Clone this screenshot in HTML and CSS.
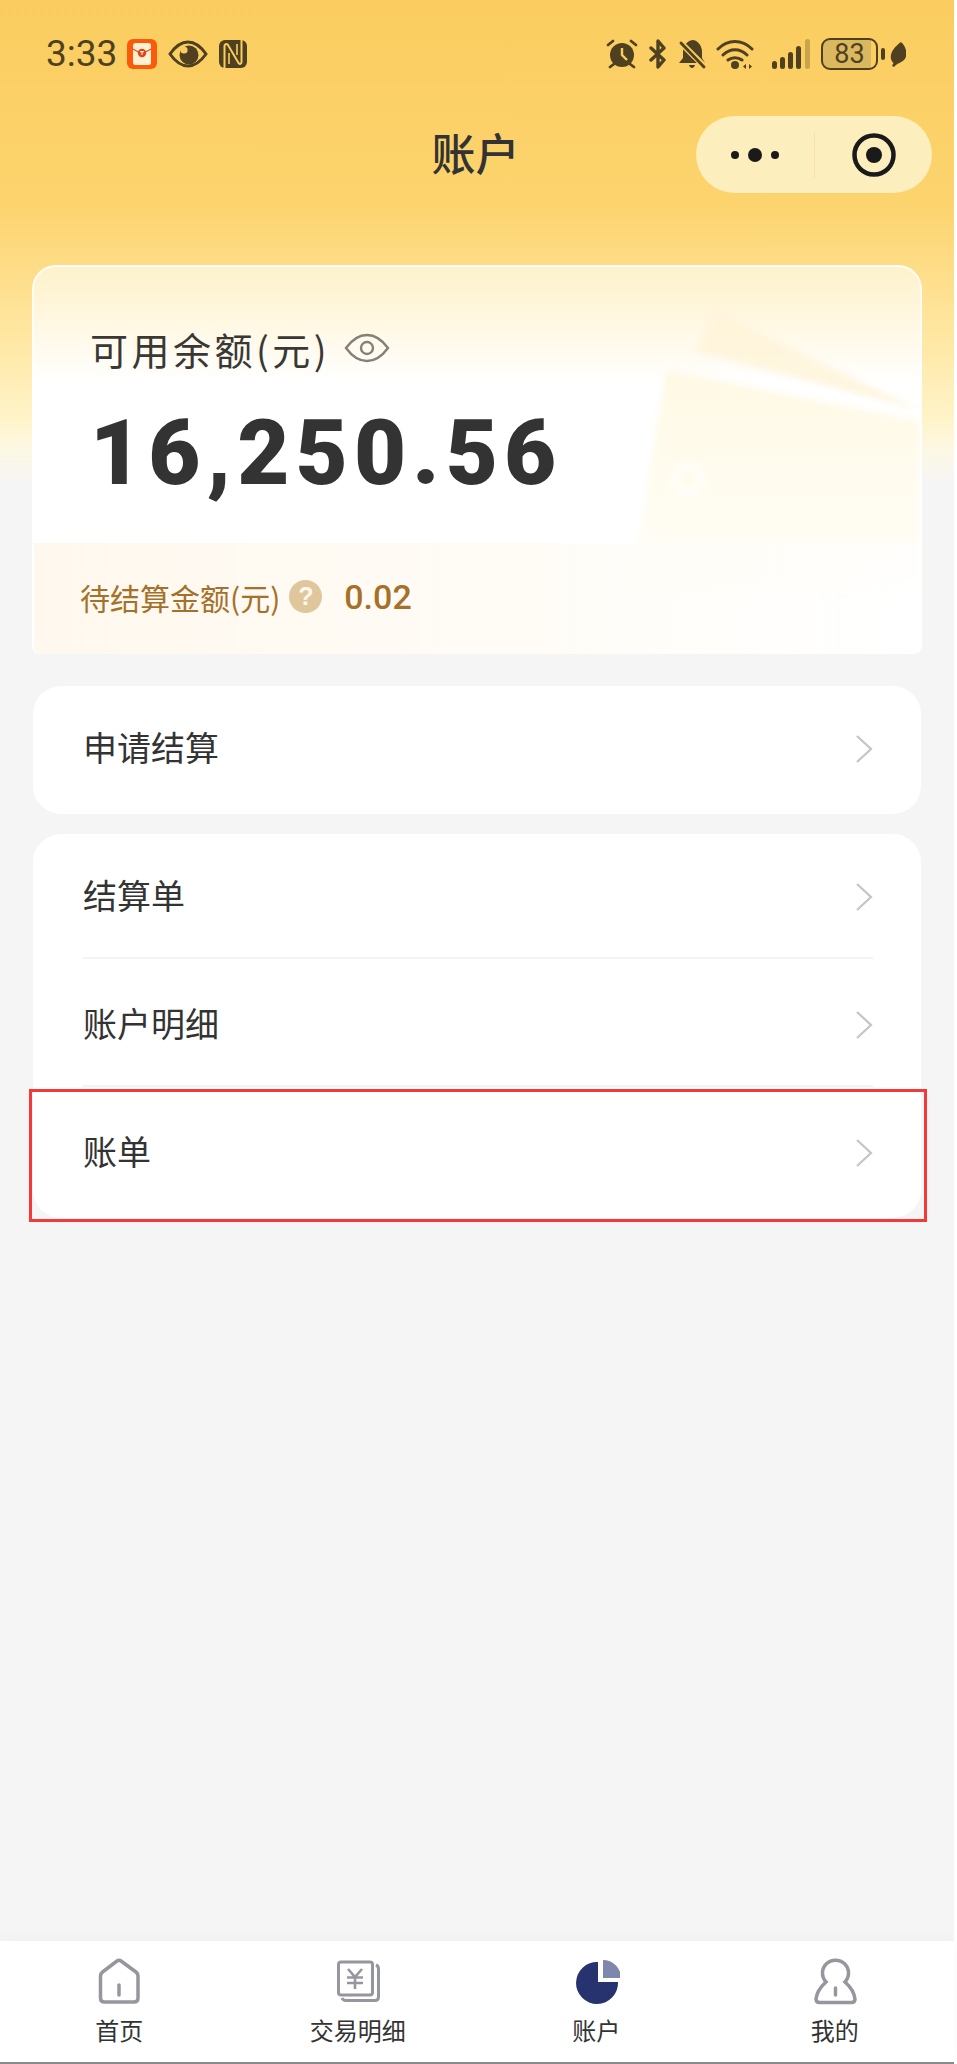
FILE: index.html
```html
<!DOCTYPE html>
<html lang="zh-CN">
<head>
    <meta charset="UTF-8">
    <meta name="viewport" content="width=device-width, initial-scale=1.0">
    <title>账户</title>
    <link rel="stylesheet" href="styles.css">
</head>
<body>
    <div class="page">

        <div class="status-bar">
            <div class="status-left">
                <span class="time">3:33</span>
                <svg class="ic-app" viewBox="0 0 30 30">
                    <rect width="30" height="30" rx="6" fill="#fb5a0a"/>
                    <rect x="6" y="4" width="18" height="22" rx="2.5" fill="#fff0d2"/>
                    <path d="M6 10 L15 15 L24 10" fill="none" stroke="#e8502a" stroke-width="1.2"/>
                    <circle cx="15" cy="14" r="4.2" fill="#e63f1c"/>
                    <path d="M13 12.6 H17 M15 12.6 V16" stroke="#fff0d2" stroke-width="1.1"/>
                </svg>
                <svg class="ic-eye" viewBox="0 0 40 28">
                    <path d="M2 14 C9 4 15 2 20 2 C25 2 31 4 38 14 C31 24 25 26 20 26 C15 26 9 24 2 14 Z" fill="none" stroke="#4f4120" stroke-width="3"/>
                    <circle cx="21" cy="15" r="9.500" fill="#4f4120"/>
                    <circle cx="16" cy="10" r="3.600" fill="#fbcd60"/>
                </svg>
                <svg class="ic-nfc" viewBox="0 0 28 28">
                    <rect width="28" height="28" rx="6" fill="#4f4120"/>
                    <path d="M5.500 28 V6 C5.500 4 7.500 3.500 9 5 L19.500 23 C21 24.500 22.500 24 22.500 22 V0" fill="none" stroke="#fbcd60" stroke-width="2"/>
                    <path d="M10 13 V24 M18 4 V15" stroke="#fbcd60" stroke-width="1.600"/>
                </svg>
            </div>
            <div class="status-right">
                <svg class="ic-alarm" viewBox="0 0 32 30">
                    <circle cx="16" cy="16" r="12" fill="#4f4120"/>
                    <path d="M16 9 V16 L21 21" fill="none" stroke="#fbcd60" stroke-width="2.400"/>
                    <path d="M2 6 L7 2 M30 6 L25 2 M4 28 L8 25 M28 28 L24 25" stroke="#4f4120" stroke-width="2.800" stroke-linecap="round"/>
                </svg>
                <svg class="ic-bt" viewBox="0 0 20 30">
                    <path d="M3 9 L16 21 L10 28 V2 L16 9 L3 21" fill="none" stroke="#4f4120" stroke-width="3.400" stroke-linejoin="round" stroke-linecap="round"/>
                </svg>
                <svg class="ic-bell" viewBox="0 0 28 30">
                    <path d="M15 1 C21 2 24 8 24 13 V19 L27 24 H1 L5 19 V13 C5 8 8 2 15 1 Z" fill="#4f4120"/>
                    <path d="M11 26 H17 C16 30 12 30 11 26 Z" fill="#4f4120"/>
                    <path d="M1 2 L27 28" stroke="#fbcd60" stroke-width="6"/>
                    <path d="M3 4 L26 28" stroke="#4f4120" stroke-width="2.800" stroke-linecap="round"/>
                </svg>
                <svg class="ic-wifi" viewBox="0 0 40 30">
                    <path d="M2 10 C12 0 26 0 36 10 M7 16 C14 9 24 9 31 16 M12 21 C16 18 22 18 26 21" fill="none" stroke="#4f4120" stroke-width="3" stroke-linecap="round"/>
                    <circle cx="19" cy="26" r="4" fill="#4f4120"/>
                    <path d="M30 25 L27 27.500 L30 30 Z M33 25 L36 27.500 L33 30 Z" fill="#4f4120"/>
                </svg>
                <svg class="ic-signal" viewBox="0 0 38 30">
                    <rect x="0" y="22" width="5" height="8" rx="2.500" fill="#4f4120"/>
                    <rect x="8" y="18" width="5" height="12" rx="2.500" fill="#4f4120"/>
                    <rect x="16" y="13" width="5" height="17" rx="2.500" fill="#4f4120"/>
                    <rect x="24" y="7" width="5" height="23" rx="2.500" fill="#4f4120"/>
                    <rect x="33" y="0" width="5" height="30" rx="2.500" fill="#c9a549"/>
                </svg>
                <div class="battery">
                    <span class="battery-level">83</span>
                </div>
                <span class="battery-nub"></span>
                <svg class="ic-leaf" viewBox="0 0 16 25">
                    <path d="M11 0 C17 5 18 14 14 18 C11 21 7 21 4 25 L2 24 C2.500 23 3 22 3.500 21 C-2 16 1 7 11 0 Z" fill="#4f4120"/>
                </svg>
            </div>
        </div>

        <div class="nav">
            <h1 class="nav-title">账户</h1>
            <div class="capsule">
                <div class="capsule-more">
                    <span class="dot"></span>
                    <span class="dot dot-big"></span>
                    <span class="dot"></span>
                </div>
                <div class="capsule-close">
                    <svg class="ic-target" viewBox="0 0 44 44">
                        <circle cx="22" cy="22" r="19.500" fill="none" stroke="#1a1a1a" stroke-width="4.500"/>
                        <circle cx="22" cy="22" r="8" fill="#1a1a1a"/>
                    </svg>
                </div>
            </div>
        </div>

        <div class="balance-card">
            <svg class="wallet" viewBox="0 0 290 280">
                <defs>
                    <linearGradient id="walletFade" x1="0" y1="0" x2="0" y2="1">
                        <stop offset="0" stop-color="#fff9e4"/>
                        <stop offset="1" stop-color="#fffefa"/>
                    </linearGradient>
                </defs>
                <path d="M65 38 L88 0 L290 97 Z" fill="#fff4d8" opacity="0.8"/>
                <path d="M35 62 Q36 58 42 58 L290 108 V280 H0 Z" fill="url(#walletFade)"/>
                <circle cx="58" cy="166" r="14" fill="none" stroke="#ffffff" stroke-width="6" opacity="0.7"/>
            </svg>
            <div class="balance-main">
                <div class="balance-label">
                    <span>可用余额(元)</span>
                    <svg class="ic-view" viewBox="0 0 46 30">
                        <path d="M2 15 C10 4 17 2 23 2 C29 2 36 4 44 15 C36 26 29 28 23 28 C17 28 10 26 2 15 Z" fill="none" stroke="#85807a" stroke-width="2.400"/>
                        <circle cx="23" cy="15" r="6" fill="none" stroke="#85807a" stroke-width="2.400"/>
                    </svg>
                </div>
                <div class="balance-amount">16,250.56</div>
            </div>
            <div class="balance-pending">
                <span class="pending-label">待结算金额(元)</span>
                <span class="help">?</span>
                <span class="pending-value">0.02</span>
            </div>
        </div>

        <div class="menu menu-first">
            <div class="menu-row">
                <span class="menu-text">申请结算</span>
                <svg class="chevron" viewBox="0 0 18 28"><path d="M2 1 L16 14 L2 27" fill="none" stroke="#c4c4c4" stroke-width="2.200"/></svg>
            </div>
        </div>

        <div class="menu">
            <div class="menu-row menu-line">
                <span class="menu-text">结算单</span>
                <svg class="chevron" viewBox="0 0 18 28"><path d="M2 1 L16 14 L2 27" fill="none" stroke="#c4c4c4" stroke-width="2.200"/></svg>
            </div>
            <div class="menu-row menu-line">
                <span class="menu-text">账户明细</span>
                <svg class="chevron" viewBox="0 0 18 28"><path d="M2 1 L16 14 L2 27" fill="none" stroke="#c4c4c4" stroke-width="2.200"/></svg>
            </div>
            <div class="menu-row">
                <span class="menu-text">账单</span>
                <svg class="chevron" viewBox="0 0 18 28"><path d="M2 1 L16 14 L2 27" fill="none" stroke="#c4c4c4" stroke-width="2.200"/></svg>
                <div class="highlight"></div>
            </div>
        </div>

        <div class="tabbar">
            <div class="tab">
                <svg class="tab-icon" viewBox="0 0 48 48">
                    <path d="M22 4 Q24 2.500 26 4 L41 15 Q43 16.500 43 19 V41 Q43 45 39 45 H9.500 Q5.500 45 5.500 41 V19 Q5.500 16.500 7.500 15 Z M24 28 V38" fill="none" stroke="#96969e" stroke-width="3.500" stroke-linecap="round"/>
                </svg>
                <span>首页</span>
            </div>
            <div class="tab">
                <svg class="tab-icon" viewBox="0 0 48 48">
                    <rect x="4.500" y="5" width="34" height="33" rx="2.500" fill="none" stroke="#96969e" stroke-width="3"/>
                    <path d="M42 8 Q44.500 9 44.500 12 V40 Q44.500 43.500 41 43.500 H12 Q9 43.500 8 41" fill="none" stroke="#96969e" stroke-width="3"/>
                    <path d="M14 12 L21 20 L28 12 M13 20.500 H29 M13 26 H29 M21 20 V32" fill="none" stroke="#96969e" stroke-width="2.600"/>
                </svg>
                <span>交易明细</span>
            </div>
            <div class="tab">
                <svg class="tab-icon" viewBox="0 0 48 48">
                    <path d="M26 5 A21 21 0 1 0 46 25 H26 Z" fill="#27336e"/>
                    <path d="M31 3 A18 18 0 0 1 49 21 H31 Z" fill="#7f87ac"/>
                </svg>
                <span>账户</span>
            </div>
            <div class="tab">
                <svg class="tab-icon" viewBox="0 0 48 48">
                    <path d="M15 25 A13 13 0 1 1 34 25 Q43 33 44 42 Q44 45.500 40.500 45.500 H8.500 Q5 45.500 5 42 Q6 33 15 25 Z" fill="none" stroke="#96969e" stroke-width="3.500"/>
                    <path d="M24.500 31 V38" stroke="#96969e" stroke-width="3.500" stroke-linecap="round"/>
                </svg>
                <span>我的</span>
            </div>
        </div>

    </div>
</body>
</html>
```

FILE: styles.css
```css
/* base */
html, body {
    margin: 0;
    padding: 0;
    background: #ffffff;
}
body {
    font-family: "Noto Sans CJK SC", "Liberation Sans", sans-serif;
    color: #333333;
}
.page {
    width: 954px;
    min-height: 2064px;
    display: flex;
    flex-direction: column;
    box-sizing: border-box;
    background: linear-gradient(180deg, #fbcd60 0, #fcd36d 200px, #fedc85 262px, #ffe9a8 350px, #fff3c8 417px, #fdf8e4 450px, #f5f5f5 484px);
}
svg {
    display: block;
    flex: none;
}

/* status bar */
.status-bar {
    display: flex;
    justify-content: space-between;
    align-items: center;
    height: 32px;
    padding: 38px 48px 0 46px;
}
.status-left, .status-right {
    display: flex;
    align-items: center;
}
.time {
    font-family: Roboto, sans-serif;
    font-size: 37px;
    line-height: 32px;
    color: #4f4120;
    width: 81px;
}
.ic-app { width: 30px; height: 30px; }
.ic-eye { width: 40px; height: 28px; margin-left: 11px; }
.ic-nfc { width: 28px; height: 28px; margin-left: 11px; }
.ic-alarm { width: 32px; height: 30px; }
.ic-bt { width: 20px; height: 30px; margin-left: 10px; }
.ic-bell { width: 28px; height: 30px; margin-left: 10px; }
.ic-wifi { width: 40px; height: 30px; margin-left: 10px; }
.ic-signal { width: 38px; height: 30px; margin-left: 16px; }
.battery {
    width: 57px;
    height: 32px;
    margin-left: 11px;
    border: 2.5px solid #4f4120;
    border-radius: 9px;
    box-sizing: border-box;
    overflow: hidden;
    background: linear-gradient(90deg, #d9b85f 90%, transparent 90%);
    display: flex;
    align-items: center;
    justify-content: center;
}
.battery-level {
    font-family: Roboto, sans-serif;
    font-size: 27px;
    line-height: 27px;
    color: #4f4120;
}
.battery-nub {
    width: 4px;
    height: 12px;
    margin-left: 3px;
    border-radius: 2px;
    background: #4f4120;
}
.ic-leaf { width: 16px; height: 25px; margin-left: 5px; }

/* nav */
.nav {
    display: grid;
    grid-template-columns: 1fr auto 1fr;
    align-items: center;
    height: 77px;
    margin-top: 46px;
    padding: 0 22px 0 19px;
}
.nav-title {
    grid-column: 2;
    margin: 0 0 4px;
    font-size: 44px;
    font-weight: 500;
    line-height: 73px;
    color: #333333;
}
.capsule {
    grid-column: 3;
    justify-self: end;
    display: flex;
    align-items: center;
    width: 236px;
    height: 77px;
    border-radius: 39px;
    background: #fdeebe;
}
.capsule-more {
    display: flex;
    align-items: center;
    justify-content: center;
    gap: 9px;
    width: 118px;
    height: 46px;
    border-right: 1px solid #f6e2a8;
}
.capsule-close {
    display: flex;
    justify-content: center;
    flex: 1;
}
.dot {
    width: 8px;
    height: 8px;
    border-radius: 50%;
    background: #1a1a1a;
}
.dot-big {
    width: 14px;
    height: 14px;
}
.ic-target { width: 44px; height: 44px; }

/* balance card */
.balance-card {
    position: relative;
    margin: 72px 32px 0;
    height: 389px;
    border: 2px solid rgba(255, 255, 255, 0.75);
    border-bottom: 0;
    border-radius: 24px 24px 8px 8px;
    box-sizing: border-box;
    overflow: hidden;
    background: linear-gradient(180deg, #fef2cb 0, #fff8e4 60px, #ffffff 115px);
}
.wallet {
    position: absolute;
    right: 0;
    top: 46px;
    width: 290px;
    height: 280px;
    filter: blur(3px);
}
.balance-main {
    position: relative;
    height: 276px;
    padding: 56px 0 0 56px;
    box-sizing: border-box;
}
.balance-label {
    display: flex;
    align-items: center;
    gap: 14px;
    height: 50px;
    font-size: 38px;
    letter-spacing: 3.500px;
    color: #3a3835;
}
.ic-view { width: 46px; height: 30px; }
.balance-amount {
    margin-top: 36px;
    font-family: Roboto, sans-serif;
    font-size: 90px;
    font-weight: 900;
    line-height: 90px;
    letter-spacing: 6.200px;
    color: #333333;
}
.balance-pending {
    position: relative;
    display: flex;
    align-items: center;
    height: 111px;
    padding: 0 0 4px 46px;
    box-sizing: border-box;
    background: linear-gradient(90deg, #fff8ee, #fffcf6 55%, rgba(255, 253, 248, 0.6) 75%, rgba(255, 255, 255, 0.7));
    color: #a5712a;
}
.pending-label {
    font-size: 30px;
    white-space: nowrap;
}
.help {
    width: 33px;
    height: 33px;
    margin-left: 9px;
    border-radius: 50%;
    background: #e0c79b;
    color: #fff8ee;
    font-family: "Liberation Sans", sans-serif;
    font-size: 25px;
    font-weight: 700;
    line-height: 33px;
    text-align: center;
}
.pending-value {
    margin-left: 22px;
    font-family: Roboto, sans-serif;
    font-size: 34px;
    font-weight: 500;
}

/* menu */
.menu {
    margin: 20px 33px 0;
    border-radius: 28px;
    background: #ffffff;
}
.menu-first {
    margin-top: 32px;
}
.menu-row {
    position: relative;
    display: flex;
    justify-content: space-between;
    align-items: center;
    height: 128px;
    padding-bottom: 2px;
    margin: 0 48px 0 50px;
    box-sizing: border-box;
    font-size: 34px;
    color: #333333;
}
.menu-text {
    margin-bottom: 5px;
}
.menu-line::after {
    content: "";
    position: absolute;
    left: 0;
    right: 0;
    bottom: 3px;
    height: 2px;
    background: #f3f3f3;
}
.chevron { width: 18px; height: 28px; }
.highlight {
    position: absolute;
    left: -54px;
    right: -54px;
    top: -1px;
    bottom: -4px;
    border: 3px solid #f53838;
    z-index: 1;
}

/* tabbar */
.tabbar {
    display: grid;
    grid-template-columns: repeat(4, 1fr);
    margin-top: auto;
    height: 123px;
    box-sizing: border-box;
    border-bottom: 2px solid #8a8a8a;
    background: #ffffff;
    box-shadow: 0 -4px 14px rgba(0, 0, 0, 0.025);
}
.tab {
    display: flex;
    flex-direction: column;
    align-items: center;
    padding-top: 16px;
    font-size: 24px;
    line-height: 34px;
    color: #333333;
}
.tab-icon {
    width: 48px;
    height: 48px;
    margin-bottom: 8px;
}
```
